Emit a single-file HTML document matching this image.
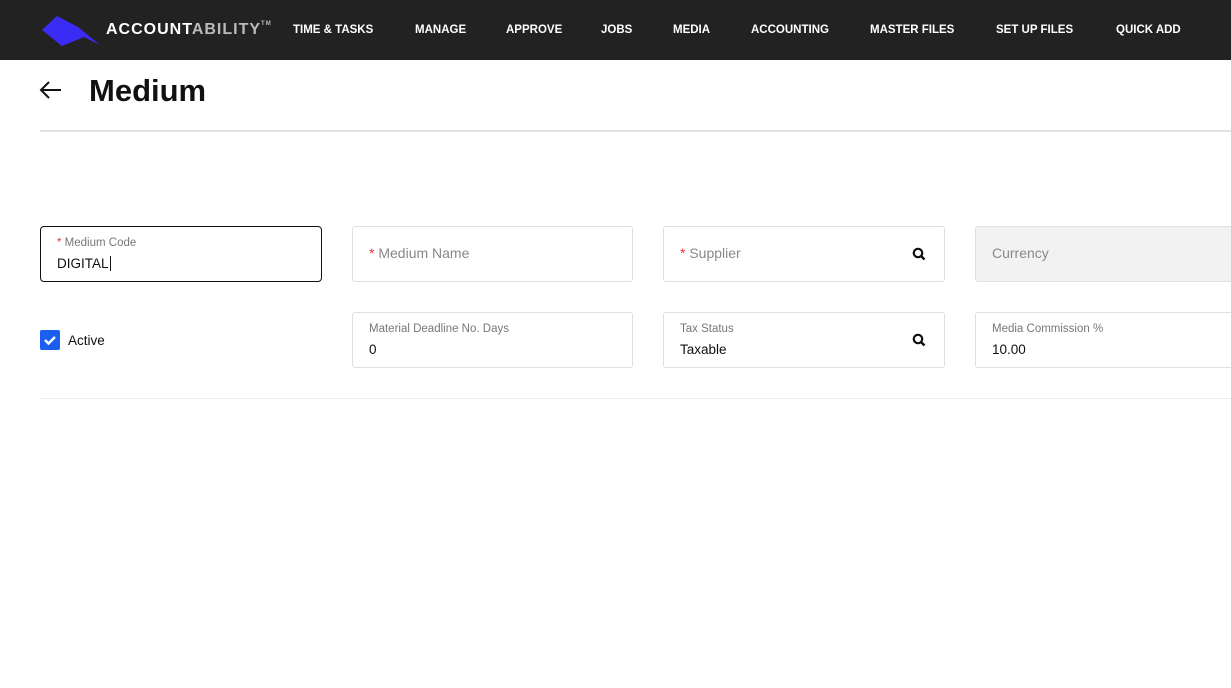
<!DOCTYPE html>
<html><head><style>
*{box-sizing:border-box;margin:0;padding:0}
body{width:1231px;height:688px;overflow:hidden;background:#fff;font-family:"Liberation Sans",sans-serif;position:relative}
.nav{position:absolute;left:0;top:0;width:1231px;height:60px;background:#222;}
.nav .brand{position:absolute;left:106px;top:21px;color:#fff;font-weight:bold;font-size:16px;letter-spacing:1px}
.nav .brand span{color:#bbb}
.nav .brand sup{font-size:6px;color:#bbb;vertical-align:top}
.nav a{position:absolute;top:24px;color:#fff;font-size:11.5px;font-weight:bold;text-decoration:none}
h1{position:absolute;left:89px;top:73px;font-size:31px;font-weight:bold;color:#111}
.hr{position:absolute;left:40px;right:0;height:2px;background:#e2e2e2}
.f{position:absolute;height:56px;border:1px solid #e0e0e0;border-radius:3px;background:#fff}
.f .l{position:absolute;left:16px;top:10px;font-size:11.5px;color:#777}
.f .v{position:absolute;left:16px;top:29px;font-size:13.5px;color:#111}
.f .p{position:absolute;left:16px;top:18px;font-size:14px;color:#888}
.r{color:#e33}
.ic{position:absolute;right:18px;top:20px}
</style></head><body>
<div class="nav">
<svg style="position:absolute;left:40px;top:13px" width="62" height="34" viewBox="0 0 62 34"><polygon points="2,17 17,3 38,14 60,32 44,24 22,33" fill="#3a2cf5"/></svg>
<div class="brand">ACCOUNT<span>ABILITY</span><sup>TM</sup></div>
<a style="left:293px">TIME &amp; TASKS</a>
<a style="left:415px">MANAGE</a>
<a style="left:506px">APPROVE</a>
<a style="left:601px">JOBS</a>
<a style="left:673px">MEDIA</a>
<a style="left:751px">ACCOUNTING</a>
<a style="left:870px">MASTER FILES</a>
<a style="left:996px">SET UP FILES</a>
<a style="left:1116px">QUICK ADD</a>
</div>
<svg style="position:absolute;left:39px;top:80px" width="24" height="20" viewBox="0 0 24 20"><path d="M22 10H2M10 2L2 10l8 8" stroke="#111" stroke-width="2" fill="none"/></svg>
<h1>Medium</h1>
<div class="hr" style="top:130px"></div>
<div class="f" style="left:40px;top:226px;width:282px;border-color:#111;border-radius:4px"><div class="l"><span class="r">*</span> Medium Code</div><div class="v">DIGITAL<span style="border-left:1px solid #111;margin-left:1px"></span></div></div>
<div class="f" style="left:352px;top:226px;width:281px"><div class="p"><span class="r">*</span> Medium Name</div></div>
<div class="f" style="left:663px;top:226px;width:282px"><div class="p"><span class="r">*</span> Supplier</div>
<svg class="ic" width="14" height="14" viewBox="0 0 14 14"><circle cx="6" cy="6" r="4.2" stroke="#111" stroke-width="2.2" fill="none"/><path d="M9 9l3.5 3.5" stroke="#111" stroke-width="2.5"/></svg></div>
<div class="f" style="left:975px;top:226px;width:270px;background:#f2f2f2"><div class="p">Currency</div></div>
<div style="position:absolute;left:40px;top:330px;width:20px;height:20px;background:#1a5ff0;border-radius:2px"><svg width="20" height="20" viewBox="0 0 20 20"><path d="M5 10l3.5 3.5L15 7" stroke="#fff" stroke-width="2.4" fill="none"/></svg></div>
<div style="position:absolute;left:68px;top:333px;font-size:13.5px;color:#111">Active</div>
<div class="f" style="left:352px;top:312px;width:281px"><div class="l">Material Deadline No. Days</div><div class="v">0</div></div>
<div class="f" style="left:663px;top:312px;width:282px"><div class="l">Tax Status</div><div class="v">Taxable</div>
<svg class="ic" width="14" height="14" viewBox="0 0 14 14"><circle cx="6" cy="6" r="4.2" stroke="#111" stroke-width="2.2" fill="none"/><path d="M9 9l3.5 3.5" stroke="#111" stroke-width="2.5"/></svg></div>
<div class="f" style="left:975px;top:312px;width:270px"><div class="l">Media Commission %</div><div class="v">10.00</div></div>
<div class="hr" style="top:398px;height:1px;background:#ececec"></div>
</body></html>
